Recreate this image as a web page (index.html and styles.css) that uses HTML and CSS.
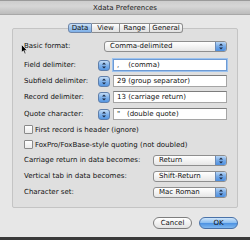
FILE: index.html
```html
<!DOCTYPE html>
<html>
<head>
<meta charset="utf-8">
<link rel="stylesheet" href="styles.css">
</head>
<body>
<div class="titlebar">Xdata Preferences</div>
<div class="content">
  <div class="tabs">
    <div class="tab sel w1">Data</div>
    <div class="tab w2">View</div>
    <div class="tab w3">Range</div>
    <div class="tab w4">General</div>
  </div>
  <div class="group">
    <div class="row r16">
      <span class="label">Basic format:</span>
      <div class="popup wide"><span class="ptext">Comma-delimited</span><span class="parrow"><svg width="10" height="9" viewBox="0 0 10 9"><path d="M3 3.5 L5 1.5 L7 3.5 Z M3 5.5 L5 7.5 L7 5.5 Z" fill="#1b2a44"/></svg></span></div>
    </div>
    <div class="row r16 mt3">
      <span class="label">Field delimiter:</span>
      <div class="ctl">
        <span class="stepper"><svg width="10" height="9" viewBox="0 0 10 9"><path d="M3 3.5 L5 1.5 L7 3.5 Z M3 5.5 L5 7.5 L7 5.5 Z" fill="#1b2a44"/></svg></span>
        <div class="field focus">,&nbsp;&nbsp;&nbsp;&nbsp;(comma)</div>
      </div>
    </div>
    <div class="row r16">
      <span class="label">Subfield delimiter:</span>
      <div class="ctl">
        <span class="stepper"><svg width="10" height="9" viewBox="0 0 10 9"><path d="M3 3.5 L5 1.5 L7 3.5 Z M3 5.5 L5 7.5 L7 5.5 Z" fill="#1b2a44"/></svg></span>
        <div class="field">29 (group separator)</div>
      </div>
    </div>
    <div class="row r16">
      <span class="label">Record delimiter:</span>
      <div class="ctl">
        <span class="stepper"><svg width="10" height="9" viewBox="0 0 10 9"><path d="M3 3.5 L5 1.5 L7 3.5 Z M3 5.5 L5 7.5 L7 5.5 Z" fill="#1b2a44"/></svg></span>
        <div class="field">13 (carriage return)</div>
      </div>
    </div>
    <div class="row r16 mt1">
      <span class="label">Quote character:</span>
      <div class="ctl">
        <span class="stepper"><svg width="10" height="9" viewBox="0 0 10 9"><path d="M3 3.5 L5 1.5 L7 3.5 Z M3 5.5 L5 7.5 L7 5.5 Z" fill="#1b2a44"/></svg></span>
        <div class="field">"&nbsp;&nbsp;&nbsp;(double quote)</div>
      </div>
    </div>
    <div class="row r15">
      <span class="check"></span><span class="clabel">First record is header (ignore)</span>
    </div>
    <div class="row r15">
      <span class="check"></span><span class="clabel">FoxPro/FoxBase-style quoting (not doubled)</span>
    </div>
    <div class="row r16">
      <span class="label">Carriage return in data becomes:</span>
      <div class="popup narrow"><span class="ptext">Return</span><span class="parrow"><svg width="10" height="9" viewBox="0 0 10 9"><path d="M3 3.5 L5 1.5 L7 3.5 Z M3 5.5 L5 7.5 L7 5.5 Z" fill="#1b2a44"/></svg></span></div>
    </div>
    <div class="row r16">
      <span class="label">Vertical tab in data becomes:</span>
      <div class="popup narrow"><span class="ptext">Shift-Return</span><span class="parrow"><svg width="10" height="9" viewBox="0 0 10 9"><path d="M3 3.5 L5 1.5 L7 3.5 Z M3 5.5 L5 7.5 L7 5.5 Z" fill="#1b2a44"/></svg></span></div>
    </div>
    <div class="row r16">
      <span class="label">Character set:</span>
      <div class="popup narrow"><span class="ptext">Mac Roman</span><span class="parrow"><svg width="10" height="9" viewBox="0 0 10 9"><path d="M3 3.5 L5 1.5 L7 3.5 Z M3 5.5 L5 7.5 L7 5.5 Z" fill="#1b2a44"/></svg></span></div>
    </div>
  </div>
  <div class="buttons">
    <div class="btn cancel">Cancel</div>
    <div class="btn ok">OK</div>
  </div>
</div>
<div class="bottombar"></div>
<svg class="cursor" width="7" height="11" viewBox="0 0 7 11"><path d="M0.5 0.5 L0.5 8.5 L2.4 6.8 L3.8 10 L5 9.4 L3.7 6.4 L6.2 6.4 Z" fill="#000" stroke="#fff" stroke-width="0.6"/></svg>
</body>
</html>
```
FILE: styles.css
```css
html, body {
  margin: 0;
  padding: 0;
}
body {
  width: 250px;
  height: 240px;
  overflow: hidden;
  position: relative;
  background: #e7e7e7;
  font-family: "DejaVu Sans", sans-serif;
  font-size: 7px;
  color: #111;
}
.titlebar {
  height: 13px;
  line-height: 14px;
  text-align: center;
  background: linear-gradient(#cdcdcd, #d6d6d6 40%, #bcbcbc);
  border-top: 1px solid #9a9a9a;
  border-bottom: 1px solid #a8a8a8;
  color: #222;
}
.content {
  padding: 8px 12px 0;
}
.tabs {
  display: flex;
  justify-content: center;
  height: 10px;
  margin-bottom: -5px;
  position: relative;
  z-index: 1;
  padding-left: 1px;
}
.tab {
  box-sizing: border-box;
  height: 10px;
  line-height: 9px;
  text-align: center;
  border: 1px solid #8d8d8d;
  border-left: none;
  background: linear-gradient(#fefefe, #ececec 55%, #e2e2e2);
}
.tab.w1 { width: 24px; border-left: 1px solid #7c8fa8; border-radius: 3px 0 0 3px; }
.tab.w2 { width: 28px; }
.tab.w3 { width: 30px; }
.tab.w4 { width: 33px; border-radius: 0 3px 3px 0; }
.tab.sel {
  background: linear-gradient(#c9e0f7, #9cc4ee 50%, #7fb0e8);
  border-color: #6f86a8;
}
.group {
  box-sizing: border-box;
  height: 180px;
  border: 1px solid #c4c4c4;
  border-radius: 2px;
  background: #dfdfdf;
  padding: 9px 10px 7px 10px;
  display: flex;
  flex-direction: column;
}
.row {
  display: flex;
  align-items: center;
}
.r16 { height: 16px; }
.r15 { height: 15px; }
.mt3 { margin-top: 3px; }
.mt1 { margin-top: 1px; }
.label {
  padding-left: 1px;
}
.popup {
  margin-left: auto;
  box-sizing: border-box;
  height: 11px;
  border: 1px solid #8e8e8e;
  border-radius: 3px;
  background: linear-gradient(#ffffff, #f3f3f3 50%, #e6e6e6);
  display: flex;
  align-items: center;
  overflow: hidden;
}
.popup.wide { width: 123px; }
.popup.narrow { width: 74px; }
.ptext {
  flex: 1;
  padding-left: 5px;
  line-height: 9px;
}
.parrow {
  width: 10px;
  height: 9px;
  background: linear-gradient(#b9d6f5, #75a9e6 50%, #4d8fe0);
  border-left: 1px solid #6a8bb8;
  display: flex;
}
.ctl {
  margin-left: auto;
  display: flex;
  align-items: center;
  gap: 3px;
}
.stepper {
  box-sizing: border-box;
  width: 12px;
  height: 11px;
  border: 1px solid #5f7fab;
  border-radius: 3px;
  background: linear-gradient(#c3dcf6, #80b2ea 50%, #5596e2);
  display: flex;
  justify-content: center;
  align-items: center;
}
.field {
  box-sizing: border-box;
  width: 114px;
  height: 12px;
  line-height: 10px;
  padding-left: 3px;
  background: #fff;
  border: 1px solid #a5a5a5;
  border-top-color: #7d7d7d;
  white-space: nowrap;
}
.field.focus {
  border-color: #6d9ad4;
  box-shadow: 0 0 0 1px #9cc3ef;
}
.check {
  box-sizing: border-box;
  width: 9px;
  height: 9px;
  margin-left: 1px;
  border: 1px solid #8a8a8a;
  border-radius: 1px;
  background: linear-gradient(#ffffff, #ebebeb);
}
.clabel {
  margin-left: 2px;
}
.buttons {
  display: flex;
  justify-content: flex-end;
  gap: 7px;
  margin-top: 9px;
}
.btn {
  box-sizing: border-box;
  width: 39px;
  height: 12px;
  line-height: 10px;
  text-align: center;
  border-radius: 6px;
}
.btn.cancel {
  border: 1px solid #7e7e7e;
  background: linear-gradient(#ffffff, #f2f2f2 50%, #e2e2e2);
}
.btn.ok {
  border: 1px solid #4a72a8;
  background: linear-gradient(#cfe5fa, #8fc0f1 45%, #4f94e3 55%, #7fb8f0);
}
.bottombar {
  position: absolute;
  left: 0;
  right: 0;
  bottom: 0;
  height: 3px;
  background: #3a3a3a;
}
.cursor {
  position: absolute;
  left: 21px;
  top: 44px;
}
```
